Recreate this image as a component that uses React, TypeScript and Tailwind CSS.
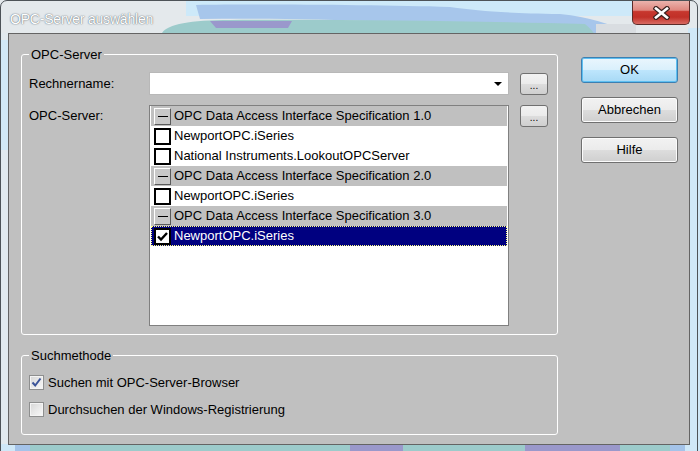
import React from 'react'

const Wallpaper = () => (
  <svg className="absolute inset-0" width="700" height="451" viewBox="0 0 700 451">
    <rect width="700" height="451" fill="#e4e9ec" />
    <rect x="0" y="33" width="9" height="418" fill="#e2eaef" />
    <rect x="0" y="40" width="9" height="110" fill="#d2e9f7" />
    <rect x="688" y="28" width="12" height="423" fill="#cfe8f8" />
    <path d="M186 0 H640 V16 H186 Z" fill="#cde9f9" />
    <path d="M196 5 C260 4 380 5 450 7 C480 11 500 13 560 14 C590 17 610 24 628 33 H520 C420 20 300 18 200 19 Z" fill="#a7c6eb" />
    <path d="M162 33 C168 24 190 20 230 20 C330 19 470 21 585 24 C590 28 592 31 594 33 Z" fill="#9ccbcb" />
    <path d="M210 21 H292 L288 28 H216 Z" fill="#9a98cc" />
    <rect x="596" y="24" width="40" height="9" fill="#d9dde1" />
    <rect x="0" y="444" width="700" height="7" fill="#9ccbcb" />
    <rect x="0" y="444" width="15" height="7" fill="#cfe8f8" />
    <rect x="15" y="444" width="15" height="7" fill="#a4c3e9" />
    <rect x="350" y="444" width="53" height="7" fill="#9a98cb" />
    <rect x="525" y="444" width="95" height="7" fill="#9a98cb" />
    <rect x="670" y="444" width="15" height="7" fill="#a4c3e9" />
    <rect x="685" y="444" width="15" height="7" fill="#cfe8f8" />
  </svg>
)

const CloseButton = () => (
  <div className="w-[58px] h-[24px] mr-[7px] rounded-b-[5px] border border-t-0 border-[#5b2b28] bg-[linear-gradient(#ebb3ad_0%,#e0877f_40%,#c7372e_46%,#c13028_70%,#d86a62_100%)] flex items-center justify-center">
    <svg width="17" height="14" viewBox="0 0 17 14">
      <path d="M3 2.5 L14 11.5 M14 2.5 L3 11.5" stroke="#3b2220" strokeWidth="5" strokeLinecap="square" />
      <path d="M3 2.5 L14 11.5 M14 2.5 L3 11.5" stroke="#ffffff" strokeWidth="2.6" strokeLinecap="square" />
    </svg>
  </div>
)

const DotsButton = () => (
  <div className="ml-[11px] w-[28px] h-[22px] rounded-[3px] border border-[#707070] bg-[linear-gradient(#f2f2f2_0%,#ebebeb_50%,#dddddd_50%,#cfcfcf_100%)] flex items-end justify-center pb-[3px] text-[10px] leading-[10px]">
    ...
  </div>
)

const DialogButton = ({ label, focused }: { label: string; focused?: boolean }) =>
  focused ? (
    <div className="w-[97px] h-[26px] rounded-[3px] border border-[#3c7fb1] shadow-[inset_0_0_0_1px_#5ec0f2] bg-[linear-gradient(#eaf6fd_0%,#d9f0fc_50%,#bee6fd_50%,#a7d9f5_100%)] flex items-center justify-center">
      {label}
    </div>
  ) : (
    <div className="w-[97px] h-[26px] rounded-[3px] border border-[#707070] shadow-[inset_0_0_0_1px_#fcfcfc] bg-[linear-gradient(#f2f2f2_0%,#ebebeb_50%,#dddddd_50%,#cfcfcf_100%)] flex items-center justify-center">
      {label}
    </div>
  )

type Row = { header?: boolean; text: string; checked?: boolean; selected?: boolean }

const rows: Row[] = [
  { header: true, text: 'OPC Data Access Interface Specification 1.0' },
  { text: 'NewportOPC.iSeries' },
  { text: 'National Instruments.LookoutOPCServer' },
  { header: true, text: 'OPC Data Access Interface Specification 2.0' },
  { text: 'NewportOPC.iSeries' },
  { header: true, text: 'OPC Data Access Interface Specification 3.0' },
  { text: 'NewportOPC.iSeries', checked: true, selected: true },
]

const ListRow = ({ row }: { row: Row }) => {
  if (row.header) {
    return (
      <div className="h-[20px] flex items-center pl-[3px] bg-[#c0c0c0]">
        <div className="w-[17px] h-[17px] border border-t-white border-l-white border-r-[#5a5a5a] border-b-[#5a5a5a] bg-[#c8c8c8] flex items-center justify-center">
          <div className="w-[10px] h-[1px] bg-black" />
        </div>
        <span className="ml-[3px] whitespace-nowrap">{row.text}</span>
      </div>
    )
  }
  return (
    <div
      className={
        row.selected
          ? 'h-[20px] flex items-center pl-[3px] bg-[#000080] text-white outline-1 outline-dotted outline-[#ffff80] -outline-offset-1'
          : 'h-[20px] flex items-center pl-[3px]'
      }
    >
      <div className="w-[17px] h-[17px] border-2 border-black bg-white flex items-center justify-center">
        {row.checked && (
          <svg width="13" height="13" viewBox="0 0 13 13">
            <path d="M2 6.5 L5 9.5 L11 3" stroke="#000" strokeWidth="2.4" fill="none" />
          </svg>
        )}
      </div>
      <span className="ml-[3px] whitespace-nowrap">{row.text}</span>
    </div>
  )
}

const ThemedCheckbox = ({ checked, label }: { checked?: boolean; label: string }) => (
  <div className="flex items-center">
    <div className="w-[15px] h-[15px] border border-[#8e8f8f] bg-[linear-gradient(135deg,#d6d6d6_0%,#ececec_60%,#f8f8f8_100%)] shadow-[inset_0_0_0_1px_#f4f4f4] flex items-center justify-center">
      {checked && (
        <svg width="11" height="11" viewBox="0 0 11 11">
          <path d="M1.5 5.5 L4.2 8.5 L9.5 1.5" stroke="#3b5499" strokeWidth="2" fill="none" />
        </svg>
      )}
    </div>
    <span className="ml-[4px] leading-[15px]">{label}</span>
  </div>
)

export default function App() {
  return (
    <div className="relative w-[700px] h-[451px] overflow-hidden font-['Liberation_Sans',Arial,sans-serif] text-[13px] text-black">
      <Wallpaper />
      <div className="relative w-[698px] h-[470px] border border-[#4d5358] rounded-t-[7px] flex flex-col">
        <div className="h-[32px] flex items-start justify-between">
          <span className="mt-[10px] ml-[9px] text-[14px] leading-[17px] tracking-[-0.2px] text-white [text-shadow:0_0_1px_rgba(60,70,80,0.9),0_0_2px_rgba(120,130,140,0.6)]">
            OPC-Server auswählen
          </span>
          <CloseButton />
        </div>
        <div className="ml-[7px] mr-[7px] h-[412px] border border-[#646464] bg-[#c0c0c0] flex">
          <div className="ml-[12px] mt-[13px] flex flex-col">
            <fieldset className="w-[537px] h-[288px] border border-white rounded-[3px]">
              <legend className="ml-[7px] px-[2px] leading-[15px]">OPC-Server</legend>
              <div className="pl-[7px]">
                <div className="mt-[10px] flex items-center">
                  <span className="w-[120px]">Rechnername:</span>
                  <div className="w-[360px] h-[23px] border border-[#b8b8b8] bg-white flex items-center justify-end pr-[6px]">
                    <svg width="8" height="4" viewBox="0 0 8 4">
                      <path d="M0 0 H8 L4 4 Z" fill="#000" />
                    </svg>
                  </div>
                  <DotsButton />
                </div>
                <div className="mt-[10px] flex items-start">
                  <span className="w-[120px] mt-[1px] leading-[20px]">OPC-Server:</span>
                  <div className="w-[360px] h-[221px] border border-[#808080] bg-white px-[1px]">
                    {rows.map((r, i) => (
                      <ListRow key={i} row={r} />
                    ))}
                  </div>
                  <DotsButton />
                </div>
              </div>
            </fieldset>
            <fieldset className="mt-[13px] w-[537px] h-[87px] border border-white rounded-[3px]">
              <legend className="ml-[7px] px-[2px] leading-[15px]">Suchmethode</legend>
              <div className="pl-[7px] mt-[12px] flex flex-col gap-[12px]">
                <ThemedCheckbox checked label="Suchen mit OPC-Server-Browser" />
                <ThemedCheckbox label="Durchsuchen der Windows-Registrierung" />
              </div>
            </fieldset>
          </div>
          <div className="ml-[23px] mt-[23px] flex flex-col gap-[14px]">
            <DialogButton label="OK" focused />
            <DialogButton label="Abbrechen" />
            <DialogButton label="Hilfe" />
          </div>
        </div>
      </div>
    </div>
  )
}
